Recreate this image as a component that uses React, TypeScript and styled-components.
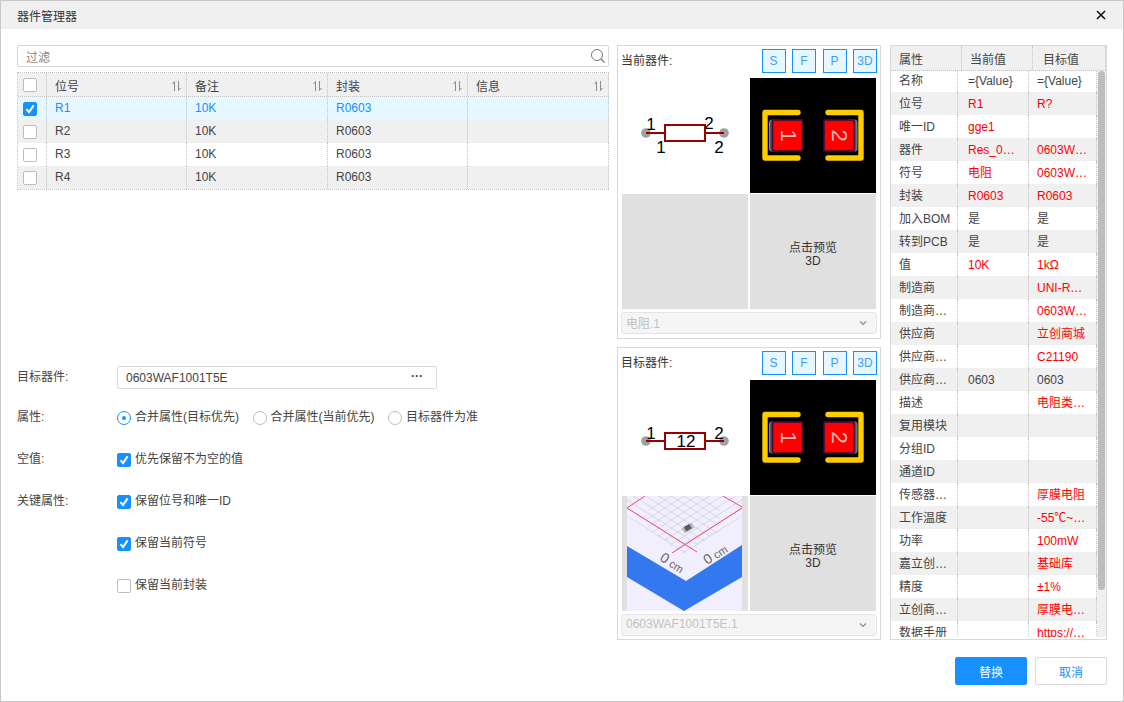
import React from 'react';
import styled, { createGlobalStyle } from 'styled-components';

const GlobalStyle = createGlobalStyle`
  html, body {
    margin: 0;
    padding: 0;
    background: #fff;
  }
  * {
    box-sizing: border-box;
  }
  body {
    font-family: "Liberation Sans", "Noto Sans CJK SC", sans-serif;
    font-size: 12px;
    color: #444;
  }
`;

const Dialog = styled.div`
  width: 1124px;
  height: 702px;
  border: 1px solid #c8c8c8;
  display: flex;
  flex-direction: column;
  overflow: hidden;
`;

const TitleBar = styled.div`
  height: 28px;
  flex: none;
  background: #f0f0f0;
  display: flex;
  align-items: center;
  justify-content: space-between;
  padding: 0 16px;
  color: #333;
`;

const CloseIcon = styled.svg`
  width: 10px;
  height: 10px;
  margin-right: 1px;
`;

const Body = styled.div`
  flex: none;
  height: 612px;
  padding: 16px 16px 0;
  display: flex;
`;

const LeftColumn = styled.div`
  width: 592px;
  flex: none;
`;

const FilterBox = styled.div`
  height: 22px;
  border: 1px solid #d9d9d9;
  border-radius: 2px;
  display: flex;
  align-items: center;
  justify-content: space-between;
  padding: 0 2px 0 8px;
  color: #888;
  margin-bottom: 5px;
`;

const SearchIcon = styled.svg`
  width: 16px;
  height: 16px;
`;

const Table = styled.div`
  border: 1px dotted #c4c4c4;
  border-right: none;
  margin-bottom: 176px;
`;

const TableRow = styled.div<{ $kind: 'head' | 'selected' | 'odd' | 'even' }>`
  display: grid;
  grid-template-columns: 29px 140px 141px 140px 141px;
  height: ${(p) => (p.$kind === 'head' ? '24px' : '23px')};
  background: ${(p) =>
    p.$kind === 'selected' ? '#e6f7ff' : p.$kind === 'even' ? '#ffffff' : '#f0f0f0'};
  color: ${(p) => (p.$kind === 'selected' ? '#1890ff' : '#444')};
  border-bottom: ${(p) => (p.$kind === 'head' ? '1px dotted #c4c4c4' : 'none')};
`;

const TableCell = styled.div`
  display: flex;
  align-items: center;
  justify-content: space-between;
  padding: 0 4px 2px 8px;
  border-right: 1px dotted #c4c4c4;
`;

const HeadCell = styled(TableCell)`
  padding: 2px 4px 0 8px;
`;

const CheckCell = styled(TableCell)`
  padding: 0 0 0 5px;
  justify-content: flex-start;
`;

const SortIcon = styled.svg`
  width: 10px;
  height: 12px;
`;

const CheckBox = styled.span<{ $on?: boolean }>`
  width: 14px;
  height: 14px;
  flex: none;
  border-radius: 2px;
  border: 1px solid ${(p) => (p.$on ? '#1890ff' : '#bdbdbd')};
  background: ${(p) => (p.$on ? '#1890ff' : '#fff')};
  display: inline-flex;
  align-items: center;
  justify-content: center;
`;

const FormRow = styled.div<{ $first?: boolean }>`
  display: grid;
  grid-template-columns: 100px 1fr;
  align-items: center;
  height: ${(p) => (p.$first ? '23px' : '20px')};
  margin-bottom: ${(p) => (p.$first ? '18px' : '22px')};
`;

const FieldLabel = styled.span`
  margin-bottom: 4px;
`;

const TargetInput = styled.div`
  width: 320px;
  height: 23px;
  border: 1px solid #d9d9d9;
  border-radius: 2px;
  display: flex;
  align-items: center;
  justify-content: space-between;
  padding: 0 13px 0 8px;
  color: #444;
`;

const Dots = styled.span`
  font-weight: bold;
  line-height: 12px;
  margin-top: -4px;
`;

const RadioGroup = styled.div`
  display: flex;
  gap: 13.5px;
`;

const OptionLabel = styled.label`
  display: inline-flex;
  align-items: center;
  gap: 4px;
`;

const OptionText = styled.span`
  margin-bottom: 4px;
`;

const Radio = styled.span<{ $on?: boolean }>`
  width: 14px;
  height: 14px;
  flex: none;
  border-radius: 50%;
  border: 1px solid ${(p) => (p.$on ? '#1890ff' : '#bdbdbd')};
  display: inline-flex;
  align-items: center;
  justify-content: center;
  &::after {
    content: '';
    display: ${(p) => (p.$on ? 'block' : 'none')};
    width: 4px;
    height: 4px;
    border-radius: 50%;
    background: #1890ff;
  }
`;

const MiddleColumn = styled.div`
  width: 264px;
  flex: none;
  margin-left: 8px;
  display: flex;
  flex-direction: column;
  gap: 8px;
`;

const PreviewPanel = styled.div<{ $height: number }>`
  height: ${(p) => p.$height}px;
  border: 1px solid #d9d9d9;
  padding: 3px 3px 0 3px;
`;

const PanelHead = styled.div`
  display: flex;
  align-items: center;
  justify-content: space-between;
  height: 24px;
  margin-bottom: 5px;
  color: #333;
`;

const PanelTitle = styled.span`
  margin-bottom: 4px;
`;

const ViewButtons = styled.div`
  display: flex;
  gap: 6.5px;
`;

const ViewButton = styled.span`
  width: 24px;
  height: 24px;
  display: flex;
  align-items: center;
  justify-content: center;
  border: 1px solid #1890ff;
  background: #e6f7ff;
  color: #3f9cf7;
`;

const PreviewGrid = styled.div`
  display: grid;
  grid-template-columns: 126px 126px;
  grid-template-rows: 115px 115px;
  column-gap: 2px;
  row-gap: 1px;
  margin-left: 1px;
`;

const SymbolCell = styled.div`
  background: #fff;
`;

const BlackCell = styled.div`
  background: #000;
`;

const GreyCell = styled.div`
  background: #e0e0e0;
`;

const PhotoCell = styled(GreyCell)`
  display: flex;
  justify-content: center;
  padding-right: 1px;
`;

const Preview3D = styled(GreyCell)`
  display: flex;
  align-items: center;
  justify-content: center;
  text-align: center;
  line-height: 13px;
  padding-top: 6px;
  color: #333;
`;

const Drawing = styled.svg`
  display: block;
  width: 100%;
  height: 100%;
`;

const PhotoDrawing = styled.svg`
  display: block;
  width: 115px;
  height: 115px;
`;

const DisabledSelect = styled.div`
  height: 22px;
  margin-top: 3px;
  border: 1px solid #e4e4e4;
  border-radius: 3px;
  background: #f5f5f5;
  color: #c2c2c2;
  display: flex;
  align-items: center;
  justify-content: space-between;
  padding: 0 9px 2px 4px;
`;

const ChevronIcon = styled.svg`
  width: 8px;
  height: 6px;
  margin-top: 2px;
`;

const RightColumn = styled.div`
  width: 217px;
  height: 595px;
  flex: none;
  margin-left: 9px;
  border: 1px solid #d9d9d9;
  display: flex;
  flex-direction: column;
  padding-bottom: 2px;
`;

const PropHead = styled.div`
  height: 25px;
  flex: none;
  display: grid;
  grid-template-columns: 71px 71px 1fr;
  background: #f0f0f0;
  border-bottom: 1px dotted #c4c4c4;
`;

const PropHeadCell = styled.div<{ $pad: number }>`
  display: flex;
  align-items: center;
  padding-left: ${(p) => p.$pad}px;
  border-right: 1px dotted #c4c4c4;
`;

const PropScroller = styled.div`
  flex: 1;
  min-height: 0;
  display: flex;
  overflow: hidden;
`;

const PropList = styled.div`
  width: 206px;
  flex: none;
  margin-top: -2px;
`;

const PropRow = styled.div<{ $even: boolean }>`
  height: 23px;
  display: grid;
  grid-template-columns: 67px 71px 68px;
  background: ${(p) => (p.$even ? '#f0f0f0' : '#fff')};
`;

const PropCell = styled.div<{ $left: number; $diff?: boolean }>`
  line-height: 25px;
  padding-left: ${(p) => p.$left}px;
  white-space: nowrap;
  border-right: 1px dotted #c4c4c4;
  color: ${(p) => (p.$diff ? '#ff0000' : '#444')};
`;

const ScrollTrack = styled.div`
  flex: 1;
  background: #f0f0f0;
  padding: 0 1px;
`;

const ScrollThumb = styled.div`
  height: 519px;
  border-radius: 4px;
  background: #bdbdbd;
`;

const Footer = styled.div`
  flex: 1;
  display: flex;
  justify-content: flex-end;
  gap: 8px;
  padding: 16px 16px 0 0;
`;

const ActionButton = styled.button<{ $primary?: boolean }>`
  width: 72px;
  height: 28px;
  border-radius: 2px;
  font: inherit;
  padding: 0;
  border: 1px solid ${(p) => (p.$primary ? '#1890ff' : '#d9d9d9')};
  background: ${(p) => (p.$primary ? '#1890ff' : '#fff')};
  color: ${(p) => (p.$primary ? '#fff' : '#1890ff')};
`;

const Check = () => (
  <svg width="10" height="10" viewBox="0 0 10 10">
    <path d="M1.5 5.2 L4 8.2 L8.6 1.4" fill="none" stroke="#fff" strokeWidth="2" />
  </svg>
);

const Sort = () => (
  <SortIcon viewBox="0 0 10 12">
    <path d="M2.5 11 V1.5 L0.5 4" fill="none" stroke="#8c8c8c" />
    <path d="M6.5 1 V10.5 L8.5 8" fill="none" stroke="#8c8c8c" />
  </SortIcon>
);

const Chevron = () => (
  <ChevronIcon viewBox="0 0 8 6">
    <path d="M1 1.5 L4 4.5 L7 1.5" fill="none" stroke="#8c8c8c" strokeWidth="1.2" />
  </ChevronIcon>
);

const Pin = ({ x, y }: { x: number; y: number }) => <circle cx={x} cy={y} r="4.8" fill="#a0a0a0" />;

const Label = ({ x, y, size = 17, children }: { x: number; y: number; size?: number; children: string }) => (
  <text x={x} y={y} fontSize={size} fill="#000" textAnchor="middle" fontFamily="Liberation Sans">
    {children}
  </text>
);

// 当前器件的原理图符号
const CurrentSymbol = () => (
  <Drawing viewBox="0 0 126 115">
    <Pin x={24} y={55} />
    <Pin x={102} y={55} />
    <path d="M24 55 H43 M83 55 H102" stroke="#990000" strokeWidth="2" />
    <rect x="43" y="47" width="40" height="16" fill="#fff" stroke="#990000" strokeWidth="2" />
    <Label x={29} y={52}>1</Label>
    <Label x={87} y={51}>2</Label>
    <Label x={39} y={75}>1</Label>
    <Label x={97} y={75}>2</Label>
  </Drawing>
);

const TargetSymbol = () => (
  <Drawing viewBox="0 0 126 115">
    <Pin x={24} y={61} />
    <Pin x={102} y={61} />
    <path d="M24 61 H43 M83 61 H102" stroke="#990000" strokeWidth="2" />
    <rect x="43" y="53" width="40" height="16" fill="#fff" stroke="#990000" strokeWidth="2" />
    <Label x={29} y={59}>1</Label>
    <Label x={64} y={67}>12</Label>
    <Label x={97} y={59}>2</Label>
  </Drawing>
);

const PadNumber = ({ x, children }: { x: number; children: string }) => (
  <text
    transform={`translate(${x} 57.7) rotate(90)`}
    y="8"
    fontSize="22"
    fill="#ffb0b0"
    textAnchor="middle"
    fontFamily="Liberation Sans"
  >
    {children}
  </text>
);

// 封装预览
const Footprint = () => (
  <Drawing viewBox="0 0 126 115">
    <path
      d="M48 34.5 H15 V80 H48 M78 34.5 H111 V80 H78"
      fill="none"
      stroke="#ffcc00"
      strokeWidth="5.4"
      strokeLinecap="round"
      strokeLinejoin="round"
    />
    <rect x="19.5" y="42" width="10" height="31" rx="2" fill="#56505c" stroke="#8a8a8a" />
    <rect x="97" y="42" width="10" height="31" rx="2" fill="#56505c" stroke="#8a8a8a" />
    <rect x="22.5" y="42" width="30" height="31" fill="#ff0000" stroke="#3c0a3c" strokeWidth="1.6" />
    <rect x="74" y="42" width="30" height="31" fill="#ff0000" stroke="#3c0a3c" strokeWidth="1.6" />
    <PadNumber x={38.5}>1</PadNumber>
    <PadNumber x={90}>2</PadNumber>
  </Drawing>
);

const gridOffsets = Array.from({ length: 15 }, (_, i) => i * 8 - 56);

// 目标器件的实物图
const ProductPhoto = () => (
  <PhotoDrawing viewBox="0 0 115 115">
    <defs>
      <clipPath id="sheet">
        <path d="M0 20 L58 58 L115 20 V0 H0 Z" />
      </clipPath>
    </defs>
    <rect width="115" height="115" fill="#f1effd" />
    <g stroke="#c8c2dc" strokeWidth="0.6" clipPath="url(#sheet)">
      {gridOffsets.map((o) => (
        <line key={`a${o}`} x1={0} y1={12 + o} x2={92} y2={70 + o} />
      ))}
      {gridOffsets.map((o) => (
        <line key={`b${o}`} x1={22} y1={70 + o} x2={115} y2={12 + o} />
      ))}
    </g>
    <g stroke="#f0476e" strokeWidth="1" fill="none">
      <path d="M0 12 L70 56" />
      <path d="M45 57 L115 12" />
      <path d="M18 0 L0 12" />
      <path d="M96 0 L115 11" />
    </g>
    <path d="M0 50 L59 85 L115 49 V81 L57 115 L0 81 Z" fill="#3478f0" />
    <g transform="translate(61 32) rotate(-30)">
      <rect x="-5.5" y="-3" width="11" height="6" fill="#b4b4b4" />
      <rect x="-3" y="-3" width="6" height="5" fill="#5a5a5a" />
    </g>
    <text transform="translate(32 64) rotate(32)" fontSize="11" fill="#666" fontFamily="Liberation Sans">
      <tspan fontSize="14">0</tspan> cm
    </text>
    <text transform="translate(80 69) rotate(-32)" fontSize="11" fill="#666" fontFamily="Liberation Sans">
      <tspan fontSize="14">0</tspan> cm
    </text>
  </PhotoDrawing>
);

const parts = [
  { ref: 'R1', note: '10K', pkg: 'R0603', kind: 'selected' as const },
  { ref: 'R2', note: '10K', pkg: 'R0603', kind: 'odd' as const },
  { ref: 'R3', note: '10K', pkg: 'R0603', kind: 'even' as const },
  { ref: 'R4', note: '10K', pkg: 'R0603', kind: 'odd' as const },
];

const props: [string, string, string, boolean?][] = [
  ['名称', '={Value}', '={Value}'],
  ['位号', 'R1', 'R?', true],
  ['唯一ID', 'gge1', '', true],
  ['器件', 'Res_0…', '0603W…', true],
  ['符号', '电阻', '0603W…', true],
  ['封装', 'R0603', 'R0603', true],
  ['加入BOM', '是', '是'],
  ['转到PCB', '是', '是'],
  ['值', '10K', '1kΩ', true],
  ['制造商', '', 'UNI-R…', true],
  ['制造商…', '', '0603W…', true],
  ['供应商', '', '立创商城', true],
  ['供应商…', '', 'C21190', true],
  ['供应商…', '0603', '0603'],
  ['描述', '', '电阻类…', true],
  ['复用模块', '', ''],
  ['分组ID', '', ''],
  ['通道ID', '', ''],
  ['传感器…', '', '厚膜电阻', true],
  ['工作温度', '', '-55℃~…', true],
  ['功率', '', '100mW', true],
  ['嘉立创…', '', '基础库', true],
  ['精度', '', '±1%', true],
  ['立创商…', '', '厚膜电…', true],
  ['数据手册', '', 'https://…', true],
];

const Panel = ({ title, height, select, symbol, photo }: {
  title: string;
  height: number;
  select: string;
  symbol: React.ReactNode;
  photo?: React.ReactNode;
}) => (
  <PreviewPanel $height={height}>
    <PanelHead>
      <PanelTitle>{title}</PanelTitle>
      <ViewButtons>
        {['S', 'F', 'P', '3D'].map((v) => (
          <ViewButton key={v}>{v}</ViewButton>
        ))}
      </ViewButtons>
    </PanelHead>
    <PreviewGrid>
      <SymbolCell>{symbol}</SymbolCell>
      <BlackCell>
        <Footprint />
      </BlackCell>
      {photo ? <PhotoCell>{photo}</PhotoCell> : <GreyCell />}
      <Preview3D>
        点击预览
        <br />
        3D
      </Preview3D>
    </PreviewGrid>
    <DisabledSelect>
      <span>{select}</span>
      <Chevron />
    </DisabledSelect>
  </PreviewPanel>
);

const App = () => {
  return (
    <Dialog>
      <GlobalStyle />
      <TitleBar>
        <span>器件管理器</span>
        <CloseIcon viewBox="0 0 10 10">
          <path d="M1 1 L9 9 M9 1 L1 9" stroke="#111" strokeWidth="1.6" />
        </CloseIcon>
      </TitleBar>
      <Body>
        <LeftColumn>
          <FilterBox>
            <span>过滤</span>
            <SearchIcon viewBox="0 0 16 16">
              <circle cx="7" cy="7" r="5.5" fill="none" stroke="#777" />
              <path d="M11 11 L14.5 14.5" stroke="#777" strokeWidth="1.2" />
            </SearchIcon>
          </FilterBox>
          <Table>
            <TableRow $kind="head">
              <CheckCell>
                <CheckBox />
              </CheckCell>
              {['位号', '备注', '封装', '信息'].map((h) => (
                <HeadCell key={h}>
                  <span>{h}</span>
                  <Sort />
                </HeadCell>
              ))}
            </TableRow>
            {parts.map((p) => (
              <TableRow key={p.ref} $kind={p.kind}>
                <CheckCell>
                  <CheckBox $on={p.kind === 'selected'}>{p.kind === 'selected' && <Check />}</CheckBox>
                </CheckCell>
                <TableCell>{p.ref}</TableCell>
                <TableCell>{p.note}</TableCell>
                <TableCell>{p.pkg}</TableCell>
                <TableCell />
              </TableRow>
            ))}
          </Table>

          <FormRow $first>
            <FieldLabel>目标器件:</FieldLabel>
            <TargetInput>
              <span>0603WAF1001T5E</span>
              <Dots>···</Dots>
            </TargetInput>
          </FormRow>
          <FormRow>
            <FieldLabel>属性:</FieldLabel>
            <RadioGroup>
              <OptionLabel>
                <Radio $on />
                <OptionText>合并属性(目标优先)</OptionText>
              </OptionLabel>
              <OptionLabel>
                <Radio />
                <OptionText>合并属性(当前优先)</OptionText>
              </OptionLabel>
              <OptionLabel>
                <Radio />
                <OptionText>目标器件为准</OptionText>
              </OptionLabel>
            </RadioGroup>
          </FormRow>
          <FormRow>
            <FieldLabel>空值:</FieldLabel>
            <OptionLabel>
              <CheckBox $on>
                <Check />
              </CheckBox>
              <OptionText>优先保留不为空的值</OptionText>
            </OptionLabel>
          </FormRow>
          <FormRow>
            <FieldLabel>关键属性:</FieldLabel>
            <OptionLabel>
              <CheckBox $on>
                <Check />
              </CheckBox>
              <OptionText>保留位号和唯一ID</OptionText>
            </OptionLabel>
          </FormRow>
          <FormRow>
            <span />
            <OptionLabel>
              <CheckBox $on>
                <Check />
              </CheckBox>
              <OptionText>保留当前符号</OptionText>
            </OptionLabel>
          </FormRow>
          <FormRow>
            <span />
            <OptionLabel>
              <CheckBox />
              <OptionText>保留当前封装</OptionText>
            </OptionLabel>
          </FormRow>
        </LeftColumn>

        <MiddleColumn>
          <Panel title="当前器件:" height={294} select="电阻.1" symbol={<CurrentSymbol />} />
          <Panel
            title="目标器件:"
            height={293}
            select="0603WAF1001T5E.1"
            symbol={<TargetSymbol />}
            photo={<ProductPhoto />}
          />
        </MiddleColumn>

        <RightColumn>
          <PropHead>
            <PropHeadCell $pad={8}>属性</PropHeadCell>
            <PropHeadCell $pad={8}>当前值</PropHeadCell>
            <PropHeadCell $pad={10}>目标值</PropHeadCell>
          </PropHead>
          <PropScroller>
            <PropList>
              {props.map(([name, cur, target, diff], i) => (
                <PropRow key={name + i} $even={i % 2 === 1}>
                  <PropCell $left={8}>{name}</PropCell>
                  <PropCell $left={10} $diff={diff}>{cur}</PropCell>
                  <PropCell $left={8} $diff={diff}>{target}</PropCell>
                </PropRow>
              ))}
            </PropList>
            <ScrollTrack>
              <ScrollThumb />
            </ScrollTrack>
          </PropScroller>
        </RightColumn>
      </Body>
      <Footer>
        <ActionButton $primary>替换</ActionButton>
        <ActionButton>取消</ActionButton>
      </Footer>
    </Dialog>
  );
};

export default App;
